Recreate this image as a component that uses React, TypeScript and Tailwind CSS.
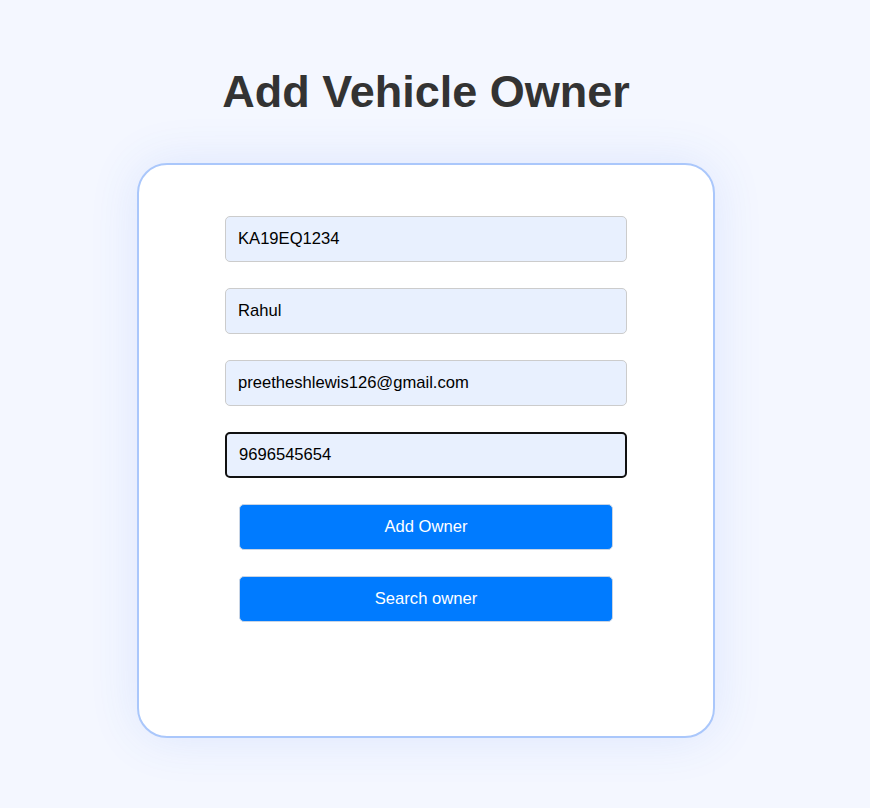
import React, { useState } from "react";

export default function App() {
  const [form, setForm] = useState({
    vehicleNo: "KA19EQ1234",
    name: "Rahul",
    email: "preetheshlewis126@gmail.com",
    phone: "9696545654",
  });

  const handleChange = (e: React.ChangeEvent<HTMLInputElement>) => {
    const { name, value } = e.target;
    setForm((prev) => ({ ...prev, [name]: value }));
  };

  const inputCls =
    "w-[402px] h-[46px] px-[12px] bg-[#e8f0fe] text-black text-[16.6px] rounded-[5px] border border-[#cccccc] outline-none";

  return (
    <div className="min-h-[808px] w-full bg-[#f4f7ff] font-['Liberation_Sans',Arial,sans-serif]">
      <div className="w-[852px] flex flex-col items-center pt-[66px]">
        <h1 className="text-[45px] leading-[52px] font-bold text-[#333333]">
          Add Vehicle Owner
        </h1>
        <div className="mt-[45px] w-[578px] h-[575px] bg-white border-2 border-[#aac7fb] rounded-[30px] shadow-[0_0_50px_rgba(60,110,240,0.12)] flex flex-col items-center pt-[51px] gap-[26px]">
          <input
            name="vehicleNo"
            value={form.vehicleNo}
            onChange={handleChange}
            className={inputCls}
          />
          <input
            name="name"
            value={form.name}
            onChange={handleChange}
            className={inputCls}
          />
          <input
            name="email"
            value={form.email}
            onChange={handleChange}
            className={inputCls}
          />
          <input
            name="phone"
            value={form.phone}
            onChange={handleChange}
            className="w-[402px] h-[46px] px-[12px] bg-[#e8f0fe] text-black text-[16.6px] rounded-[5px] border-2 border-[#111111] outline-none"
          />
          <button
            type="button"
            className="w-[374px] h-[46px] bg-[#007bff] text-white text-[16.6px] rounded-[5px] border border-[#c8d4e4]"
          >
            Add Owner
          </button>
          <button
            type="button"
            className="w-[374px] h-[46px] bg-[#007bff] text-white text-[16.6px] rounded-[5px] border border-[#c8d4e4]"
          >
            Search owner
          </button>
        </div>
      </div>
    </div>
  );
}
